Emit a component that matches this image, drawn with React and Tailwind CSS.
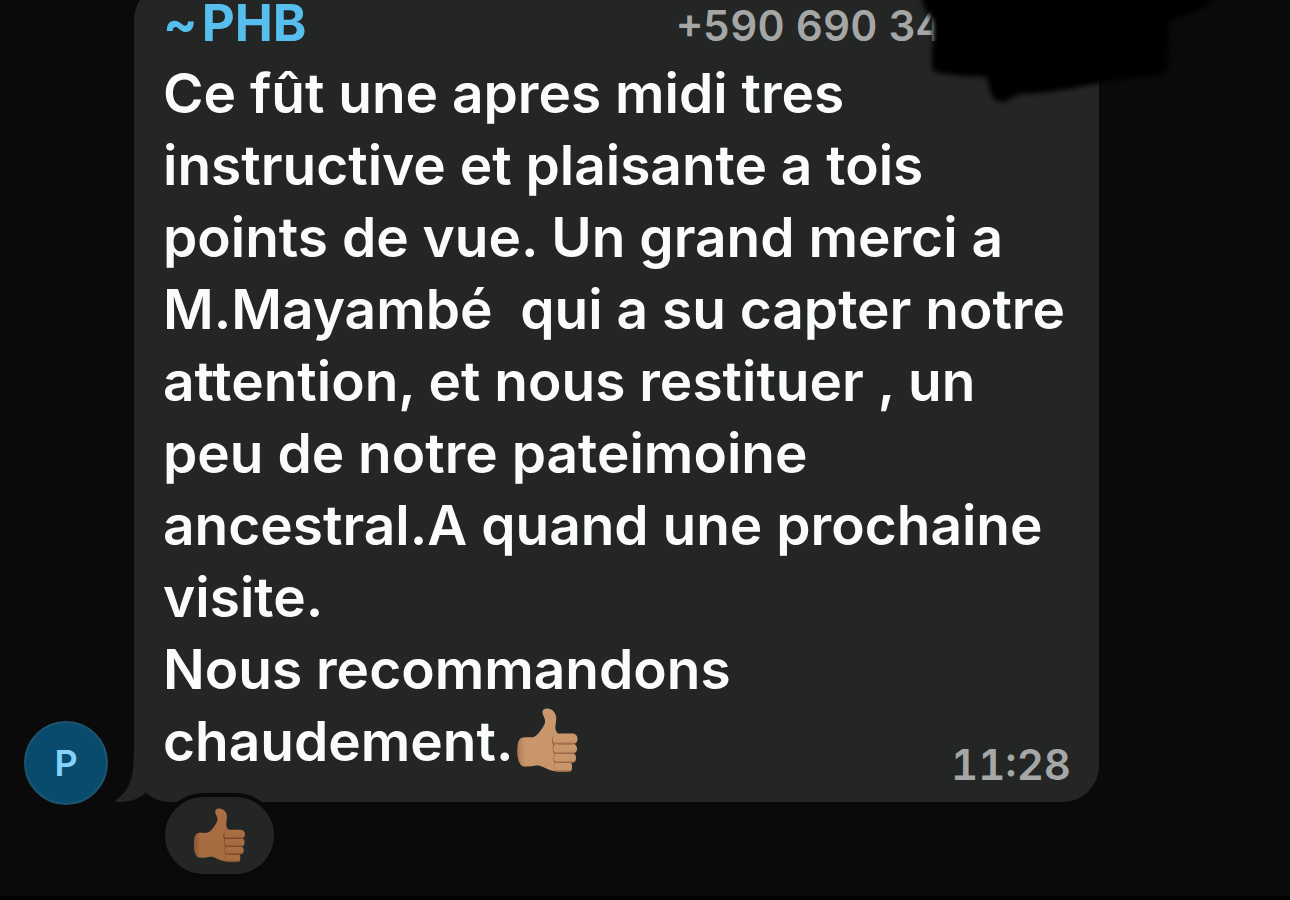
import { useId } from "react";

const lines = [
  "Ce fût une apres midi tres",
  "instructive et plaisante a tois",
  "points de vue. Un grand merci a",
  "M.Mayambé\u00a0 qui a su capter notre",
  "attention, et nous restituer , un",
  "peu de notre pateimoine",
  "ancestral.A quand une prochaine",
  "visite.",
  "Nous recommandons",
];

const lightSkin = { base: "#c8946a", light: "#cb986e", dark: "#8f5c3e" };
const tanSkin = { base: "#a56b41", light: "#aa6f43", dark: "#713f22" };

function ThumbsUp({ skin, className }) {
  const id = useId();

  return (
    <svg
      viewBox="0 0 61 66"
      className={className}
      role="img"
      aria-label="Thumbs up"
    >
      <defs>
        <linearGradient id={id + "hand"} x1="0" y1="0" x2="0" y2="1">
          <stop offset="0" stopColor={skin.light} />
          <stop offset="1" stopColor={skin.base} />
        </linearGradient>
        <linearGradient id={id + "finger"} x1="0" y1="0" x2="0" y2="1">
          <stop offset="0" stopColor={skin.light} />
          <stop offset="0.75" stopColor={skin.base} />
          <stop offset="1" stopColor={skin.dark} />
        </linearGradient>
        <linearGradient id={id + "wrist"} x1="0" y1="0" x2="1" y2="0">
          <stop offset="0" stopColor={skin.dark} stopOpacity="0.5" />
          <stop offset="1" stopColor={skin.dark} stopOpacity="0" />
        </linearGradient>
      </defs>
      <path
        d="M4 30C8 28.500 13 30 17 29C20 27 22 25 24 22C27 18 28.500 15 28 12C27.500 9 25 6 25.500 3.500C26 1 28 .3 30.500 .5C35 1 38.500 4 39.200 9C39.600 13 38 17 38.500 21C39 24 41 26 44 28L46 60C44 64 38 64 33 62C27 60 24 57 19 57.500C14 58.500 9 59 5 58C1.500 55 .3 49 .4 43C.5 37 1 32 4 30Z"
        fill={`url(#${id}hand)`}
      />
      <path
        d="M4 30C1 32 .4 38 .4 44S1.500 55 5 58L8 58.500V30Z"
        fill={`url(#${id}wrist)`}
      />
      <path
        d="M39 26C34 29 34 33 36 37C35 41 36 44 37 46C36 50 36 53 38 56C37 59 37 62 39 64L52 61L56 50V30Z"
        fill={skin.dark}
        opacity="0.75"
      />
      <rect x="37.500" y="54" width="17.500" height="10" rx="4" fill={`url(#${id}finger)`} />
      <rect x="37" y="45" width="22" height="10" rx="4.500" fill={`url(#${id}finger)`} />
      <rect x="36.500" y="35.500" width="23.500" height="10.500" rx="4.800" fill={`url(#${id}finger)`} />
      <rect x="36" y="25.500" width="24.500" height="11" rx="5" fill={`url(#${id}finger)`} />
    </svg>
  );
}

function BubbleTail() {
  return (
    <svg
      viewBox="0 0 50 56"
      className="absolute bottom-0 -left-5 w-[50px] h-14"
      aria-hidden="true"
    >
      <path
        d="M20 0C20 24 19 42 3 53C0 55 1 56 4 56C14 56 24 54 31 47L36 30V0Z"
        fill="#232625"
      />
    </svg>
  );
}

function Scribble() {
  return (
    <svg
      viewBox="0 0 310 110"
      className="absolute top-0 right-[65px] w-[310px] h-[110px]"
      aria-hidden="true"
    >
      <defs>
        <filter id="soft" x="-5%" y="-10%" width="110%" height="120%">
          <feGaussianBlur stdDeviation="2.500" />
        </filter>
      </defs>
      <path
        d="M5 -10L9 8L18 22L18 42L17 50V66Q17 72 24 73L48 76L71 77L77 96Q80 102 87 102Q92 102 98 97Q104 93 112 94Q140 92 170 86L200 80L240 76Q252 74 253 66L254 20Q275 16 303 -2V-10Z"
        fill="#000"
        filter="url(#soft)"
      />
    </svg>
  );
}

export default function App() {
  return (
    <div className="relative min-h-screen overflow-hidden bg-[#0a0a0a] border-b-4 border-black font-['Inter',sans-serif]">
      <main className="pl-6 pr-[191px]">
        <div className="flex items-end gap-[26px]">
          <div className="shrink-0 size-[84px] rounded-full border-2 border-[#1d5470] bg-[#084b6d] flex items-center justify-center text-4xl font-semibold text-[#84d3fa]">
            P
          </div>

          <article className="relative flex-1 min-w-0 -mt-4 mb-[3px] pt-4 px-[29px] pb-[25px] rounded-[36px] bg-[#232625]">
            <BubbleTail />

            <header className="h-[57px] flex items-start whitespace-nowrap">
              <h1 className="flex gap-1 text-[51px] leading-[46px] font-bold text-[#57bfee]">
                <span>~</span>
                <span>PHB</span>
              </h1>
              <span className="ml-auto mr-[127px] text-[42px] leading-[52px] font-semibold tabular-nums text-[#a5a7a6]">
                +590 690 34
              </span>
            </header>

            <p className="text-[55px] leading-[72px] font-semibold text-[#fafbfb] whitespace-nowrap">
              {lines.map((line) => (
                <span key={line} className="block">
                  {line}
                </span>
              ))}
              <span className="flex items-center gap-1">
                chaudement.
                <ThumbsUp skin={lightSkin} className="w-[61px] h-[66px]" />
              </span>
            </p>

            <time className="absolute right-7 bottom-3 text-[42px] leading-[50px] font-semibold tabular-nums text-[#a5a7a6]">
              11:28
            </time>
          </article>
        </div>

        <button
          type="button"
          className="relative -mt-3 ml-[137px] w-[117px] h-[85px] rounded-full border-4 border-[#080909] bg-[#232625] flex items-center justify-center"
        >
          <ThumbsUp skin={tanSkin} className="w-[53px] h-14" />
        </button>
      </main>

      <Scribble />
    </div>
  );
}
